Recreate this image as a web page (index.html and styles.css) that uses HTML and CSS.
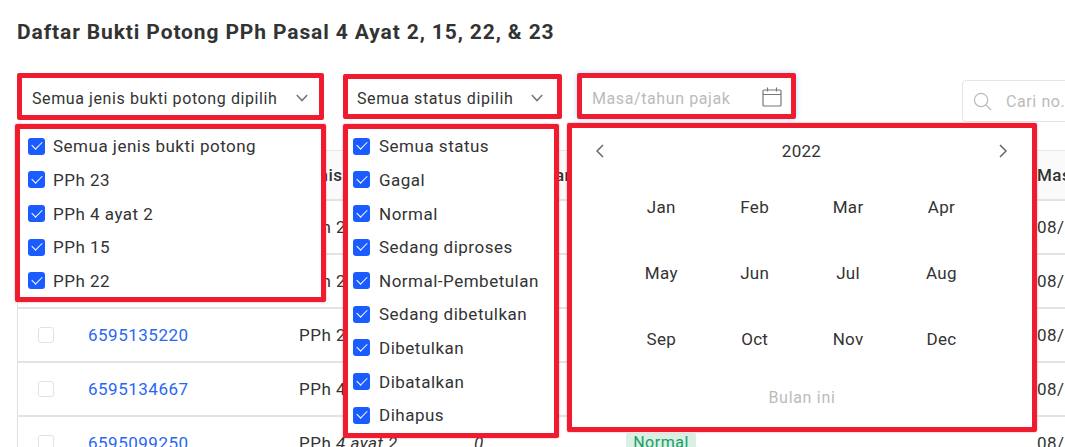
FILE: index.html
```html
<!DOCTYPE html>
<html lang="id">
<head>
<meta charset="utf-8">
<title>Daftar Bukti Potong</title>
<link rel="stylesheet" href="styles.css">
</head>
<body>
<div class="page">
  <h1 class="title">Daftar Bukti Potong PPh Pasal 4 Ayat 2, 15, 22, &amp; 23</h1>
  <div class="toolbar">
    <div class="field field-jenis red"><span>Semua jenis bukti potong dipilih</span><svg class="chev" viewBox="0 0 12 8"><path d="M.8 1l5.200 5.500L11.200 1"/></svg></div>
    <div class="field field-status red"><span>Semua status dipilih</span><svg class="chev" viewBox="0 0 12 8"><path d="M.8 1l5.200 5.500L11.200 1"/></svg></div>
    <div class="field field-masa red"><span class="ph">Masa/tahun pajak</span><svg class="cal" viewBox="0 0 20 20"><path d="M2 3h16a1 1 0 0 1 1 1v14a1 1 0 0 1-1 1H2a1 1 0 0 1-1-1V4a1 1 0 0 1 1-1zM1 7.500h18M5.500 .5v4M14.500 .5v4"/></svg></div>
    <div class="search"><svg class="mag" viewBox="0 0 20 20"><circle cx="8.500" cy="8.500" r="7"/><path d="M13.500 13.500l5.500 5.500"/></svg><span class="ph">Cari no. bukti potong</span></div>
  </div>
  <div class="table">
    <div class="row head"><span class="c-check"></span><span class="c-no">No. Bukti Potong</span><span class="c-jenis">Jenis</span><span class="c-obj">Pemotongan</span><span class="c-status">Status</span><span class="c-masa">Masa/Tahun</span></div>
    <div class="row"><span class="c-check"><i class="box"></i></span><a class="c-no">6595135301</a><span class="c-jenis">PPh 23</span><span class="c-obj">0</span><span class="c-status"><b class="badge">Normal</b></span><span class="c-masa">08/2022</span></div>
    <div class="row"><span class="c-check"><i class="box"></i></span><a class="c-no">6595135280</a><span class="c-jenis">PPh 23</span><span class="c-obj">0</span><span class="c-status"><b class="badge">Normal</b></span><span class="c-masa">08/2022</span></div>
    <div class="row"><span class="c-check"><i class="box"></i></span><a class="c-no">6595135220</a><span class="c-jenis">PPh 23</span><span class="c-obj">0</span><span class="c-status"><b class="badge">Normal</b></span><span class="c-masa">08/2022</span></div>
    <div class="row"><span class="c-check"><i class="box"></i></span><a class="c-no">6595134667</a><span class="c-jenis">PPh 4 ayat 2</span><span class="c-obj">0</span><span class="c-status"><b class="badge">Normal</b></span><span class="c-masa">08/2022</span></div>
    <div class="row"><span class="c-check"><i class="box"></i></span><a class="c-no">6595099250</a><span class="c-jenis">PPh <em>4 ayat 2</em></span><span class="c-obj"><em>0</em></span><span class="c-status"><b class="badge">Normal</b></span><span class="c-masa">08/2022</span></div>
  </div>
</div>

<ul class="pop pop-jenis red">
  <li><i class="on"></i>Semua jenis bukti potong</li>
  <li><i class="on"></i>PPh 23</li>
  <li><i class="on"></i>PPh 4 ayat 2</li>
  <li><i class="on"></i>PPh 15</li>
  <li><i class="on"></i>PPh 22</li>
</ul>
<ul class="pop pop-status red">
  <li><i class="on"></i>Semua status</li>
  <li><i class="on"></i>Gagal</li>
  <li><i class="on"></i>Normal</li>
  <li><i class="on"></i>Sedang diproses</li>
  <li><i class="on"></i>Normal-Pembetulan</li>
  <li><i class="on"></i>Sedang dibetulkan</li>
  <li><i class="on"></i>Dibetulkan</li>
  <li><i class="on"></i>Dibatalkan</li>
  <li><i class="on"></i>Dihapus</li>
</ul>
<div class="pop pop-cal red">
  <div class="cal-head">
    <svg class="nav" viewBox="0 0 8 14"><path d="M7 1L1 7l6 6"/></svg>
    <span>2022</span>
    <svg class="nav" viewBox="0 0 8 14"><path d="M1 1l6 6-6 6"/></svg>
  </div>
  <div class="months">
    <span>Jan</span><span>Feb</span><span>Mar</span><span>Apr</span>
    <span>May</span><span>Jun</span><span>Jul</span><span>Aug</span>
    <span>Sep</span><span>Oct</span><span>Nov</span><span>Dec</span>
  </div>
  <div class="this-month">Bulan ini</div>
</div>
</body>
</html>
```
FILE: styles.css
```css
* { box-sizing: border-box; }
html, body { margin: 0; height: 100%; }
body {
  position: relative;
  width: 1065px;
  height: 447px;
  overflow: hidden;
  background: #fff;
  font-family: Roboto, "Liberation Sans", sans-serif;
  font-size: 17px;
  color: #333;
  letter-spacing: .5px;
}
.page { padding: 20px 0 0 17px; width: 1300px; }
.title { margin: 0; font-size: 21px; line-height: 24px; font-weight: 700; color: #333; letter-spacing: .88px; }

.toolbar { display: flex; align-items: flex-start; margin-top: 28px; height: 78px; font-size: 16px; letter-spacing: .6px; }
.red { border: 5px solid #ee1c2e; border-radius: 2px; background: #fff; }
.field { display: flex; align-items: center; justify-content: space-between; color: #333; padding-top: 3px; }
.field-jenis { width: 307px; height: 47px; padding-left: 10px; padding-right: 11px; margin-top: 1px; }
.field-status { width: 219px; height: 45px; padding-left: 9px; padding-right: 14px; margin: 2px 0 0 19px; }
.field-masa { width: 219px; height: 46px; padding-top: 5px; padding-left: 10px; padding-right: 9px; margin: 1px 0 0 15px; box-shadow: 0 0 6px #b9d4fb; }
.chev { width: 12px; height: 8px; fill: none; stroke: #777; stroke-width: 1.600; }
.cal { width: 20px; height: 20px; margin-top: -3px; fill: none; stroke: #777; stroke-width: 1.200; }
.ph { color: #bbb; }
.search { display: flex; align-items: center; gap: 14px; width: 300px; height: 42px; margin: 8px 0 0 166px; padding-left: 10px; border: 1px solid #e4e4e4; border-radius: 4px; flex: none; }
.mag { width: 19px; height: 19px; fill: none; stroke: #bbb; stroke-width: 1.300; flex: none; }
.search .ph { white-space: nowrap; }

.table { width: 1240px; border-left: 1px solid #e0e0e0; border-top: 1px solid #e6e6e6; }
.row { display: flex; align-items: center; height: 54px; border-bottom: 2px solid #e3e3e3; }
.row.head { height: 50px; background: #fafafa; font-weight: 500; }
.row span, .row a { flex: none; display: block; white-space: nowrap; }
.c-check { width: 70px; padding-left: 20px; }
.c-no { width: 211px; color: #2a66f5; }
.c-jenis { width: 175px; }
.c-obj { width: 152px; }
.head .c-obj { letter-spacing: .3px; }
.c-status { width: 411px; }
.head .c-no { color: #333; }
.box { display: block; width: 16px; height: 16px; border: 1px solid #e2e2e2; border-radius: 3px; background: #fff; }
.badge { display: block; width: 70px; text-align: center; background: #d9f0e5; color: #1a9e6a; font-weight: 400; font-size: 16px; line-height: 20px; border-radius: 2px; }

.pop { position: absolute; margin: 0; padding: 0; list-style: none; box-shadow: 0 0 2px rgba(238, 28, 46, .5); }
.pop-jenis { left: 15px; top: 124px; width: 311px; height: 178px; padding: .6px 0 0 8px; }
.pop-status { left: 343px; top: 124px; width: 216px; height: 314px; padding: .6px 0 0 5px; }
.pop-cal { left: 567px; top: 123px; width: 470px; height: 309px; }
.pop li { display: flex; align-items: center; gap: 9px; height: 33.600px; }
.pop-jenis li { gap: 8px; }
.on {
  display: block; flex: none; width: 17px; height: 17px; border-radius: 3px; background: #1a5cff;
  position: relative;
}
.on::after {
  content: ""; position: absolute; left: 4px; top: 3.500px; width: 9px; height: 5px;
  border-left: 1.200px solid #fff; border-bottom: 1.200px solid #fff;
  transform: rotate(-45deg);
}
.cal-head { display: flex; justify-content: space-between; align-items: center; height: 46px; padding: 0 25px 0 24px; }
.nav { width: 8px; height: 14px; fill: none; stroke: #666; stroke-width: 1.500; }
.months { display: grid; grid-template-columns: repeat(4, 93.400px); grid-auto-rows: 66px; margin: 0 0 0 42.600px; }
.months span { text-align: center; line-height: 66px; }
.cal-head span, .months span { letter-spacing: .3px; }
.this-month { margin-top: 14px; text-align: center; color: #bbb; line-height: 24px; font-size: 16px; letter-spacing: .7px; }
```
